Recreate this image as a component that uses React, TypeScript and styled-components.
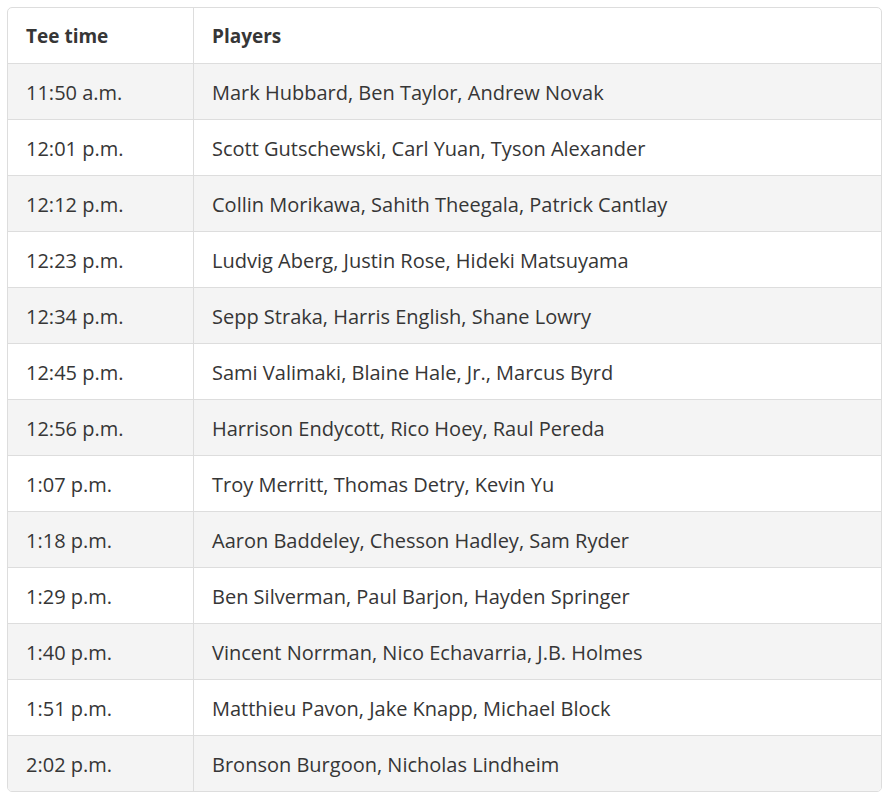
import React from "react";
import styled, { createGlobalStyle } from "styled-components";

const GlobalStyle = createGlobalStyle`
  body {
    margin: 0;
    padding: 7px;
    background: #ffffff;
    font-family: "Open Sans", "Noto Sans", Arial, sans-serif;
  }
`;

const Wrapper = styled.div`
  width: 873px;
  border: 1px solid #dddddd;
  border-radius: 5px;
  overflow: hidden;
`;

const Table = styled.table`
  width: 100%;
  border-collapse: collapse;
  font-size: 20px;
  color: #363636;
`;

const HeadCell = styled.th`
  height: 55px;
  padding: 0 18px;
  text-align: left;
  font-weight: 700;
  font-size: 19px;
  color: #363636;
  border-bottom: 1px solid #dddddd;

  &:first-child {
    width: 149px;
    border-right: 1px solid #dddddd;
  }
`;

const Row = styled.tr<{ $shaded: boolean }>`
  background: ${(p) => (p.$shaded ? "#f4f4f4" : "#ffffff")};

  &:not(:last-child) td {
    border-bottom: 1px solid #dddddd;
  }
`;

const Cell = styled.td`
  height: 53px;
  padding: 2px 18px 0;
  font-weight: 400;
  line-height: 1;

  &:first-child {
    border-right: 1px solid #dddddd;
  }
`;

const teeTimes: [string, string][] = [
  ["11:50 a.m.", "Mark Hubbard, Ben Taylor, Andrew Novak"],
  ["12:01 p.m.", "Scott Gutschewski, Carl Yuan, Tyson Alexander"],
  ["12:12 p.m.", "Collin Morikawa, Sahith Theegala, Patrick Cantlay"],
  ["12:23 p.m.", "Ludvig Aberg, Justin Rose, Hideki Matsuyama"],
  ["12:34 p.m.", "Sepp Straka, Harris English, Shane Lowry"],
  ["12:45 p.m.", "Sami Valimaki, Blaine Hale, Jr., Marcus Byrd"],
  ["12:56 p.m.", "Harrison Endycott, Rico Hoey, Raul Pereda"],
  ["1:07 p.m.", "Troy Merritt, Thomas Detry, Kevin Yu"],
  ["1:18 p.m.", "Aaron Baddeley, Chesson Hadley, Sam Ryder"],
  ["1:29 p.m.", "Ben Silverman, Paul Barjon, Hayden Springer"],
  ["1:40 p.m.", "Vincent Norrman, Nico Echavarria, J.B. Holmes"],
  ["1:51 p.m.", "Matthieu Pavon, Jake Knapp, Michael Block"],
  ["2:02 p.m.", "Bronson Burgoon, Nicholas Lindheim"],
];

const App: React.FC = () => {
  return (
    <>
      <GlobalStyle />
      <Wrapper>
        <Table>
          <thead>
            <tr>
              <HeadCell>Tee time</HeadCell>
              <HeadCell>Players</HeadCell>
            </tr>
          </thead>
          <tbody>
            {teeTimes.map(([time, players], i) => (
              <Row key={time} $shaded={i % 2 === 0}>
                <Cell>{time}</Cell>
                <Cell>{players}</Cell>
              </Row>
            ))}
          </tbody>
        </Table>
      </Wrapper>
    </>
  );
};

export default App;
